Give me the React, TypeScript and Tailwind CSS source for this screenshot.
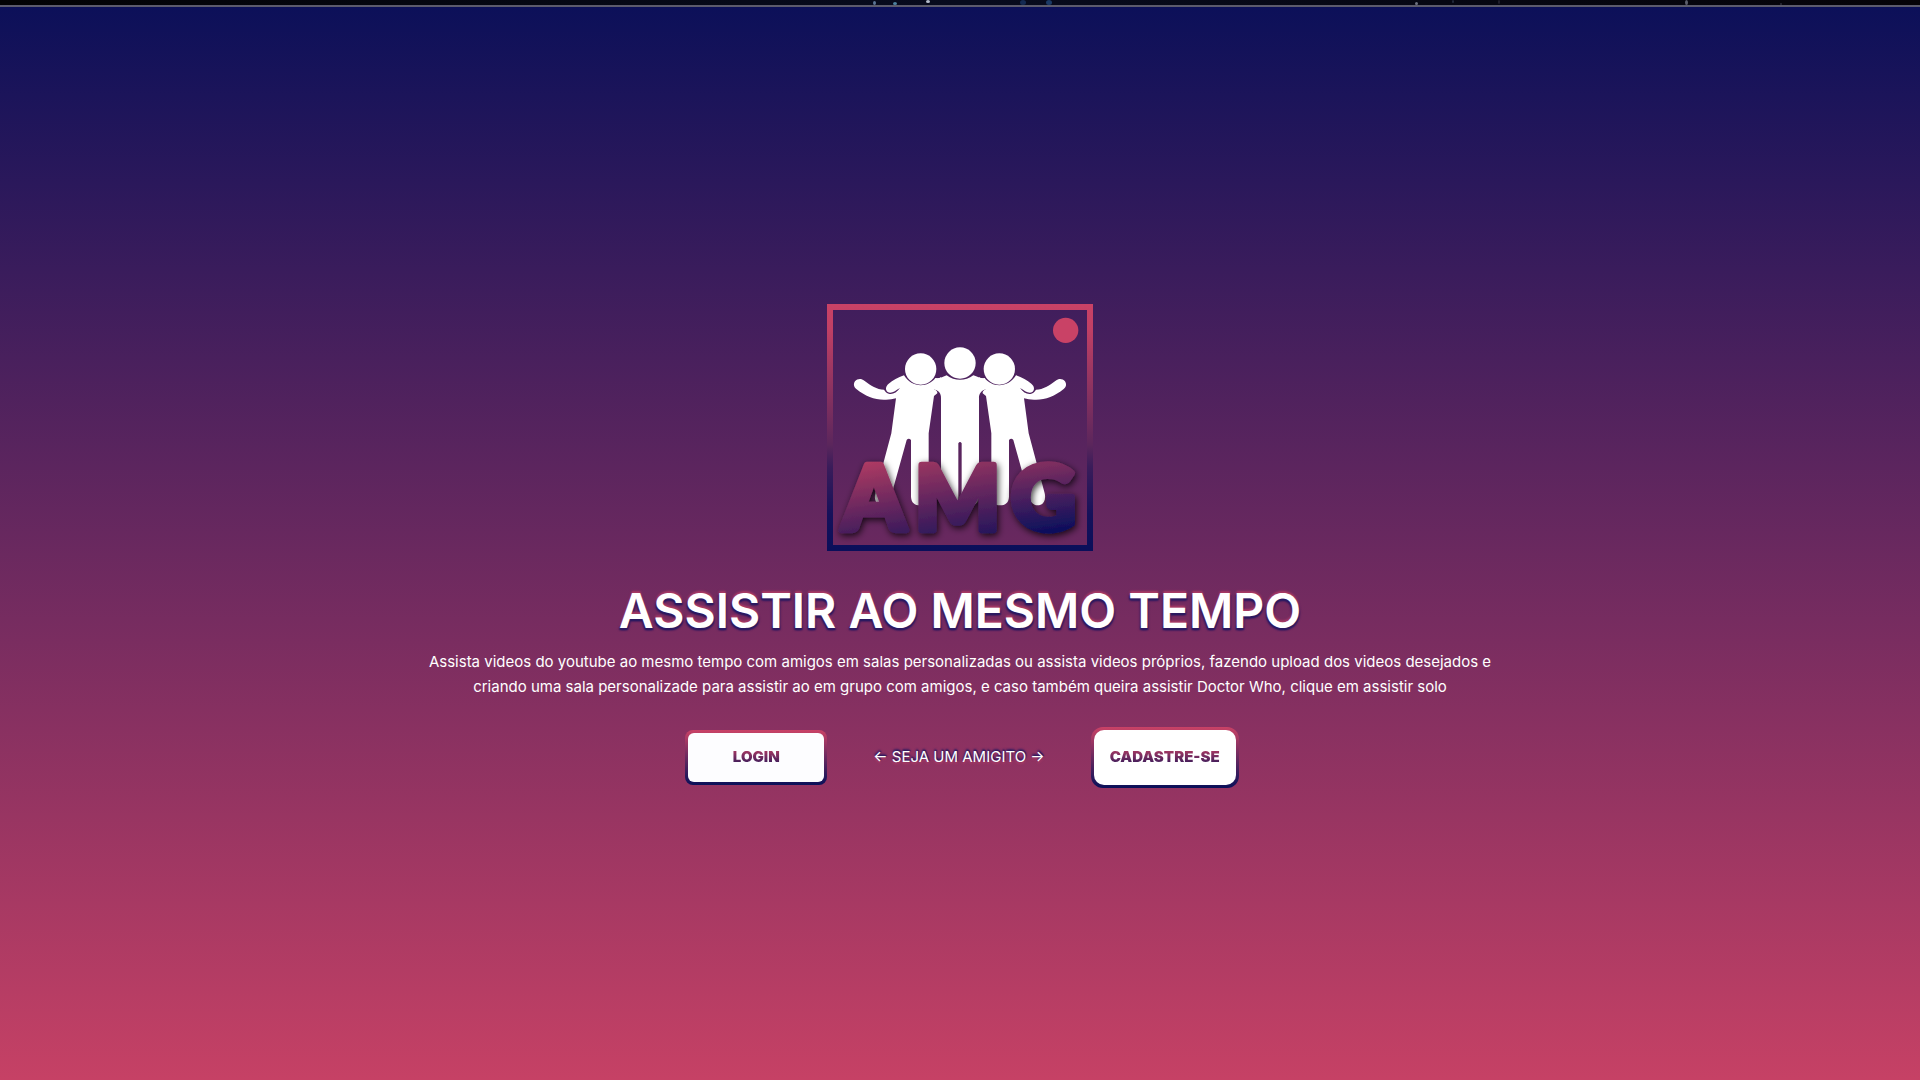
function StarStrip() {
  const stars = [
    { x: 873, y: 1, w: 3, h: 4, c: '#5b7494' },
    { x: 893, y: 2, w: 4, h: 3, c: '#4d82a0' },
    { x: 926, y: 0, w: 4, h: 3, c: '#b4bccb' },
    { x: 1020, y: 0, w: 6, h: 5, c: '#142a52' },
    { x: 1046, y: 0, w: 6, h: 5, c: '#1b3a66' },
    { x: 1415, y: 2, w: 3, h: 3, c: '#6d7280' },
    { x: 1685, y: 0, w: 3, h: 5, c: '#5c5e6b' },
    { x: 1452, y: 0, w: 2, h: 3, c: '#232a3c' },
    { x: 1498, y: 0, w: 2, h: 4, c: '#23222f' },
    { x: 1780, y: 3, w: 2, h: 2, c: '#2c2c3a' },
  ];
  return (
    <svg className="h-full w-full" viewBox="0 0 1920 5" preserveAspectRatio="none" aria-hidden="true">
      {stars.map((s) => (
        <ellipse key={s.x} cx={s.x + s.w / 2} cy={s.y + s.h / 2} rx={s.w / 2} ry={s.h / 2} fill={s.c} />
      ))}
    </svg>
  );
}

function Logo() {
  return (
    <svg className="w-[266px] max-w-full" viewBox="51 42 798 741" role="img" aria-label="AMG">
      <defs>
        <linearGradient id="frame" x1="0" y1="42" x2="0" y2="783" gradientUnits="userSpaceOnUse">
          <stop offset="0" stopColor="#c94266" />
          <stop offset="0.1" stopColor="#c04065" />
          <stop offset="0.57" stopColor="#5b265c" />
          <stop offset="0.66" stopColor="#3a1c5a" />
          <stop offset="0.85" stopColor="#16115a" />
          <stop offset="1" stopColor="#0a0f5a" />
        </linearGradient>
        <linearGradient id="letters" x1="410" y1="490" x2="450" y2="750" gradientUnits="userSpaceOnUse">
          <stop offset="0" stopColor="#a03762" />
          <stop offset="1" stopColor="#24155a" />
        </linearGradient>
        <linearGradient id="lettersG" x1="680" y1="500" x2="710" y2="720" gradientUnits="userSpaceOnUse">
          <stop offset="0" stopColor="#8c3260" />
          <stop offset="1" stopColor="#10105c" />
        </linearGradient>
        <linearGradient id="lettersA" x1="180" y1="510" x2="220" y2="750" gradientUnits="userSpaceOnUse">
          <stop offset="0" stopColor="#b03b63" />
          <stop offset="1" stopColor="#35195b" />
        </linearGradient>
        <filter id="shade" x="-20%" y="-20%" width="140%" height="150%">
          <feDropShadow dx="4" dy="7" stdDeviation="11" floodColor="#000" floodOpacity="0.8" />
        </filter>
      </defs>
      <rect x="60" y="51" width="780" height="723" fill="none" stroke="url(#frame)" strokeWidth="18" />
      <circle cx="767" cy="121" r="38" fill="#c94266" />
      <g fill="#fff">
        <g id="friend">
          <circle cx="332" cy="237" r="47" />
          <path d="M282 256C264 262 248 271 236 281C226 289 226 300 233 306C244 313 256 302 270 294C260 308 248 314 236 311C228 308 225 303 222 299C200 298 183 287 163 272C153 264 142 266 135 274C129 283 132 292 139 297C166 319 198 331 228 329C240 329 248 327 258 325L244 430L196 610C192 627 197 641 210 645C224 649 237 640 241 626L290 450Q296 442 303 450V620C304 638 314 646 330 646C347 646 355 637 356 620V430L372 318L382 310C383 304 379 301 372 297L393 299V262Q386 266 376 264C354 294 304 294 282 256Z" />
        </g>
        <use href="#friend" transform="translate(900 0) scale(-1 1)" />
        <path d="M374 299C386 301 394 310 393 326V620C394 638 405 646 419 646C436 646 445 637 445 620V460Q450 452 455 460V620C455 637 464 646 481 646C496 646 506 638 507 620V326C506 310 514 301 530 296L524 265C512 267 504 260 490 256C466 274 434 274 410 256C399 260 389 267 377 265Z" />
        <circle cx="450" cy="219" r="47" />
      </g>
      <g
        fontFamily="Lato, sans-serif"
        fontWeight="900"
        fontSize="270"
        strokeWidth="19"
        strokeLinejoin="round"
        filter="url(#shade)"
      >
        <text x="97" y="719" fill="url(#lettersA)" stroke="url(#lettersA)">A</text>
        <text x="314" y="719" fill="url(#letters)" stroke="url(#letters)">M</text>
        <text x="602" y="719" fill="url(#lettersG)" stroke="url(#lettersG)">G</text>
      </g>
    </svg>
  );
}

export default function App() {
  return (
    <div className="flex min-h-screen flex-col font-['Inter',sans-serif] text-white">
      <header className="h-[7px] border-b-2 border-[#5c5b6c] bg-linear-to-r/srgb from-[#020204] via-[#070b1e] to-[#050308]">
        <StarStrip />
      </header>
      <main className="flex flex-1 flex-col items-center justify-center bg-linear-to-b/srgb from-[#0c1059] to-[#c64165] px-4 pt-[5px] text-center">
        <Logo />
        <h1 className="mt-[30px] text-5xl leading-[60px] font-semibold [text-shadow:0_-2px_2px_#a93a64,0_2px_1px_#2c1a60,-1px_2px_2px_#2c1a60,1px_2px_2px_#2c1a60]">
          ASSISTIR AO MESMO TEMPO
        </h1>
        <p className="mt-2 max-w-[1088px] text-[15px] leading-[25px]">
          Assista videos do youtube ao mesmo tempo com amigos em salas personalizadas ou assista videos próprios,
          fazendo upload dos videos desejados e criando uma sala personalizade para assistir ao em grupo com amigos, e
          caso também queira assistir Doctor Who, clique em assistir solo
        </p>
        <div className="mt-7 flex flex-wrap items-center justify-center gap-[46px] pl-1">
          <button className="rounded-lg bg-linear-to-b/srgb from-[#c94266] to-[#0a1059] p-[3px]">
            <span className="flex h-[49px] w-[136px] items-center justify-center rounded-md bg-[#fdfdff]">
              <span className="bg-linear-to-b/srgb from-[#c94266] to-[#0f1057] bg-clip-text text-[15px] font-black text-transparent">
                LOGIN
              </span>
            </span>
          </button>
          <span className="text-[15px] [text-shadow:0_-2px_2px_#2c1a60,1px_-1px_1px_#2c1a60,0_2px_2px_#a93a64]">
            ← SEJA UM AMIGITO →
          </span>
          <button className="rounded-xl bg-linear-to-b/srgb from-[#c94266] to-[#0a1059] p-[3px]">
            <span className="flex h-[55px] w-[142px] items-center justify-center rounded-[10px] bg-white">
              <span className="bg-linear-to-b/srgb from-[#c94266] to-[#0f1057] bg-clip-text text-[15px] font-black text-transparent">
                CADASTRE-SE
              </span>
            </span>
          </button>
        </div>
      </main>
    </div>
  );
}
